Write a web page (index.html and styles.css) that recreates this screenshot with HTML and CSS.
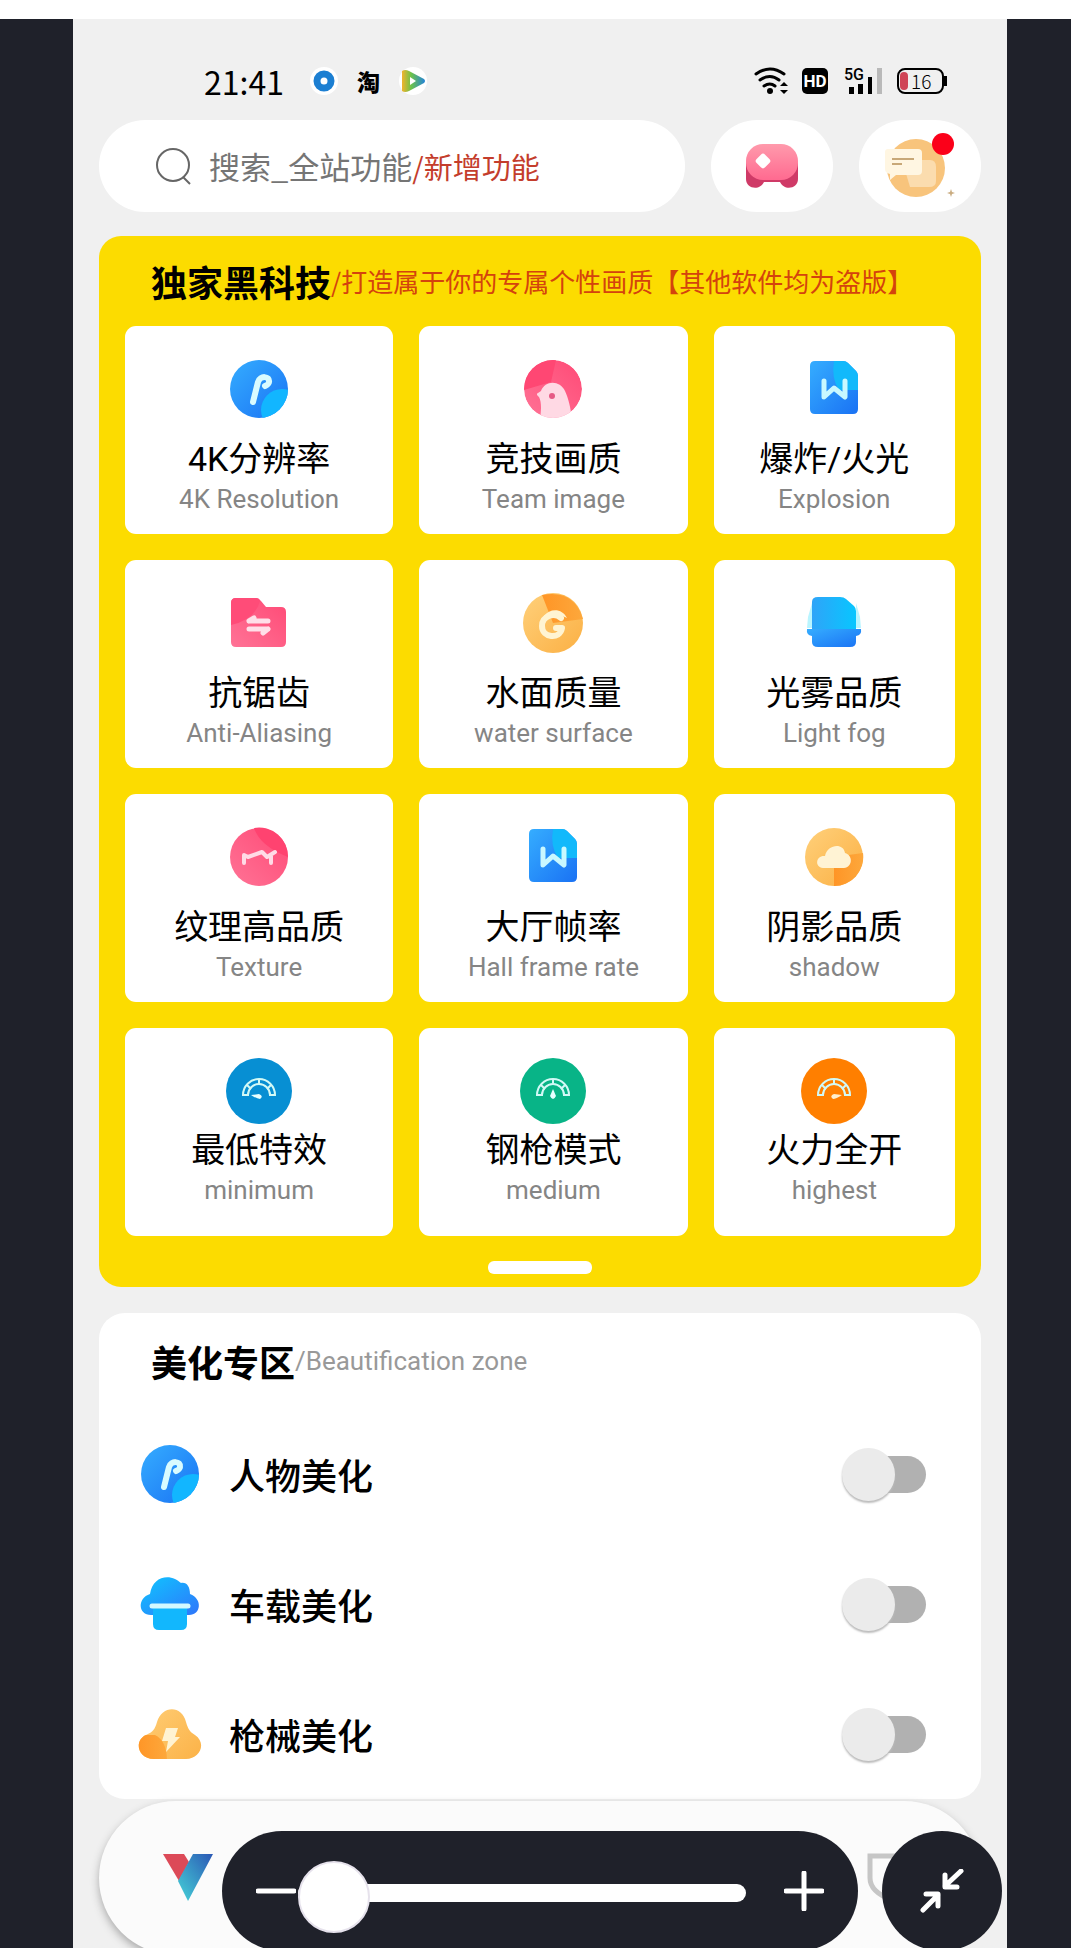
FILE: index.html
```html
<!DOCTYPE html>
<html lang="zh-CN">
<head>
<meta charset="utf-8">
<meta name="viewport" content="width=device-width, initial-scale=1">
<title>独家黑科技</title>
<link rel="stylesheet" href="styles.css">
</head>
<body>
<svg class="defs" width="0" height="0" aria-hidden="true">
  <defs>
    <linearGradient id="blue" x1="0" y1="0" x2="1" y2="1"><stop offset="0" stop-color="#35adff"/><stop offset="1" stop-color="#1a72f4"/></linearGradient>
    <linearGradient id="cyan" x1="0" y1="0" x2="1" y2="1"><stop offset="0" stop-color="#0fc6ff"/><stop offset="1" stop-color="#2f76fb"/></linearGradient>
    <linearGradient id="sky" x1="0" y1="0" x2="1" y2="0"><stop offset="0" stop-color="#2fa4f8"/><stop offset="1" stop-color="#08c6ff"/></linearGradient>
    <linearGradient id="pink" x1="0" y1="1" x2="1" y2="0"><stop offset="0" stop-color="#ff7396"/><stop offset="1" stop-color="#ff4a76"/></linearGradient>
    <linearGradient id="rose" x1="0" y1="0" x2="0" y2="1"><stop offset="0" stop-color="#ff9aac"/><stop offset="1" stop-color="#ff6a90"/></linearGradient>
    <linearGradient id="gold" x1="0" y1="0" x2="1" y2="1"><stop offset="0" stop-color="#ffd07a"/><stop offset="1" stop-color="#fbb044"/></linearGradient>
    <linearGradient id="amber" x1="0" y1="0" x2="1" y2="0"><stop offset="0" stop-color="#ff9526"/><stop offset="1" stop-color="#fda83c"/></linearGradient>
    <linearGradient id="vee" x1="1" y1="0" x2="0" y2="1"><stop offset="0" stop-color="#2b57b5"/><stop offset="1" stop-color="#45d4d8"/></linearGradient>
    <linearGradient id="play" x1="0" y1="0" x2="1" y2="0"><stop offset="0" stop-color="#f2b32c"/><stop offset=".4" stop-color="#6cc24a"/><stop offset="1" stop-color="#2484d8"/></linearGradient>
    <clipPath id="disc"><circle cx="33" cy="33" r="29"/></clipPath>
    <clipPath id="puff"><path d="M17 58C0 58-3 39 9 34c7-3 9-6 11-13 5-17 25-17 29 0 2 7 4 10 9 13 12 8 5 24-9 24z"/></clipPath>
    <symbol id="i-cane" viewBox="0 0 66 66">
      <circle cx="33" cy="33" r="29" fill="url(#blue)"/>
      <circle cx="56" cy="54" r="21" fill="#12b6ff" clip-path="url(#disc)"/>
      <path d="M27 46l5-20c2-7 12-6 11 0 0 2-2 3-4 4" fill="none" stroke="#d9fbff" stroke-width="6" stroke-linecap="round" stroke-linejoin="round"/>
    </symbol>
    <symbol id="i-bird" viewBox="0 0 66 66">
      <g clip-path="url(#disc)">
        <circle cx="33" cy="33" r="29" fill="url(#pink)"/>
        <path d="M4 4h32l-5 22-27 8z" fill="#ff4773"/>
        <path d="M20 66c1-12 2-19-1-25-2-2-3-3-1-4l3-2c4-11 19-11 24 0 4 9 6 18 7 31z" fill="#ffd9e4"/>
      </g>
      <circle cx="32" cy="40" r="3" fill="#e65a85"/>
    </symbol>
    <symbol id="i-doc" viewBox="0 0 66 66">
      <path d="M14 5h28q3 0 5 2l8 8q2 2 2 5v33q0 5-5 5H14q-5 0-5-5V10q0-5 5-5z" fill="url(#blue)"/>
      <path d="M33 5h9q3 0 5 2l8 8q2 2 2 5v14H38q-8-12-5-29z" fill="#12b9fb"/>
      <path d="M23 25v16l10-9 11 9V25" fill="none" stroke="#c9f8ff" stroke-width="5" stroke-linecap="round" stroke-linejoin="round"/>
    </symbol>
    <symbol id="i-folder" viewBox="0 0 66 66">
      <path d="M10 8h20q3 0 5 3l5 6h15q5 0 5 5v30q0 5-5 5H10q-5 0-5-5V13q0-5 5-5z" fill="url(#pink)"/>
      <path d="M10 8h20q3 0 4 3Q29 30 5 35V13q0-5 5-5z" fill="#ff4c78"/>
      <path d="M23 31h19M23 31l5-3M42 39H23M42 39l-5 4" fill="none" stroke="#ffdfe8" stroke-width="5" stroke-linecap="round"/>
    </symbol>
    <symbol id="i-swirl" viewBox="0 0 66 66">
      <circle cx="33" cy="33" r="30" fill="url(#gold)"/>
      <path d="M33 33L22 5q32-6 41 24z" fill="url(#amber)"/>
      <path d="M41 28c-7-6-19-2-19 8 0 12 18 14 20 2h-6" fill="none" stroke="#fff4d2" stroke-width="6" stroke-linecap="round" stroke-linejoin="round"/>
      <path d="M24 26c6-8 18-8 23 2-6-3-12-3-19 1z" fill="#fff4d2"/>
    </symbol>
    <symbol id="i-scan" viewBox="0 0 66 66">
      <path d="M7 27l4-14v25H6zM59 27l-4-14v25h5z" fill="#b9f5ff"/>
      <path d="M17 7h22q4 0 6 2l8 7q2 2 2 5v21H11V12q0-5 6-5z" fill="url(#sky)"/>
      <path d="M6 39h54q1 6-5 7v6q0 5-6 5H17q-6 0-6-5v-6q-6-1-5-7z" fill="url(#blue)"/>
    </symbol>
    <symbol id="i-dog" viewBox="0 0 66 66">
      <circle cx="33" cy="33" r="29" fill="url(#pink)"/>
      <path d="M28 4Q34 22 62 33A29 29 0 0 0 28 4z" fill="#ff4370"/>
      <path d="M18 39V31l4 2 14-5 5 5 8-5M45 39v-7" fill="none" stroke="#ffdbe6" stroke-width="4" stroke-linecap="round" stroke-linejoin="round"/>
    </symbol>
    <symbol id="i-cloud" viewBox="0 0 66 66">
      <circle cx="33" cy="33" r="29" fill="url(#gold)"/>
      <path d="M33 33l29-4A29 29 0 0 1 33 62z" fill="url(#amber)"/>
      <path d="M22 44c-9-1-7-13 2-12 2-11 18-14 20-3 8 2 8 14-1 15z" fill="#fff3d4"/>
    </symbol>
    <symbol id="dial" viewBox="0 0 66 66">
      <path d="M17 37a16 16 0 0 1 32 0h-5a11 11 0 0 0-22 0z" fill="none" stroke="#d2f9f6" stroke-width="2"/>
      <path d="M21 27l4 4M33 21v6M45 27l-4 4" stroke="#d2f9f6" stroke-width="2"/>
    </symbol>
    <symbol id="i-low" viewBox="0 0 66 66"><circle cx="33" cy="33" r="33" fill="#078fd3"/><use href="#dial" width="66" height="66"/><path d="M25 37l8-1q5 2 1 5-3 0-9-4z" fill="#e6ffff"/></symbol>
    <symbol id="i-mid" viewBox="0 0 66 66"><circle cx="33" cy="33" r="33" fill="#08b487"/><use href="#dial" width="66" height="66"/><path d="M33 31l3 7q-3 6-6 0z" fill="#e6ffff"/></symbol>
    <symbol id="i-high" viewBox="0 0 66 66"><circle cx="33" cy="33" r="33" fill="#ff7f00"/><use href="#dial" width="66" height="66"/><path d="M41 37l-8-1q-5 2-1 5 3 0 9-4z" fill="#ffefcc"/></symbol>
    <symbol id="i-mushroom" viewBox="0 0 66 66">
      <path d="M14 44C1 44 0 27 13 23 15 8 28 3 38 8c3 1 4 3 6 4 6-1 9 4 9 11 13 5 11 21-1 21z" fill="url(#cyan)"/>
      <path d="M16 37h34v16q0 6-6 6H22q-6 0-6-6z" fill="#12b7fd"/>
      <path d="M15 35h36" stroke="#d3f8ff" stroke-width="5" stroke-linecap="round"/>
    </symbol>
    <symbol id="i-bolt" viewBox="0 0 66 66">
      <g clip-path="url(#puff)">
        <path d="M0 0h66v66H0z" fill="url(#gold)"/>
        <path d="M0 34h18q12 6 12 26H0z" fill="url(#amber)"/>
      </g>
      <path d="M29 27h12l-3 9h5L29 51l2-11h-6z" fill="#fff3d2"/>
    </symbol>
  </defs>
</svg>

<div class="phone">
  <header class="status">
    <time class="clock">21:41</time>
    <svg class="app-dot" viewBox="0 0 28 28" aria-hidden="true"><circle cx="14" cy="14" r="14" fill="#fff"/><circle cx="14" cy="14" r="7" fill="none" stroke="#1c7fd2" stroke-width="7"/></svg>
    <span class="app-tao">淘</span>
    <svg class="app-dot" viewBox="0 0 28 28" aria-hidden="true"><circle cx="14" cy="14" r="14" fill="#fff"/><path d="M3 4q3-2 7 0l15 8q2 2 0 4l-15 8q-4 2-7 0z" fill="url(#play)"/><path d="M11 10l6 4-6 4z" fill="#fff"/></svg>
    <span class="grow"></span>
    <svg class="wifi" viewBox="0 0 36 28" aria-hidden="true"><g fill="none" stroke="#000" stroke-width="3" stroke-linecap="round"><path d="M3 7q14-10 28 0M7 13q10-7 19 0M11 19q6-4 11 0"/></g><circle cx="17" cy="24" r="3"/><path d="M27 19l4-4 4 4zM27 23l4 4 4-4z"/></svg>
    <span class="hd">HD</span>
    <span class="signal"><span class="gen">5G</span><svg viewBox="0 0 40 28" aria-hidden="true"><path d="M5 20h5v7H5zM14 17h5v10h-5zM24 10h4v17h-4z"/><path d="M33 1h5v26h-5z" fill="#b9b9b9"/></svg></span>
    <span class="battery"><span class="level"></span>16</span>
  </header>

  <div class="top">
    <button class="search" type="button">
      <svg viewBox="0 0 38 38" fill="none" stroke="#666" stroke-width="2" aria-hidden="true"><circle cx="18" cy="18" r="16"/><path d="M28 30l7 7"/></svg>
      <span>搜索_全站功能<em>/新增功能</em></span>
    </button>
    <button class="round" type="button" aria-label="游戏">
      <svg width="60" height="60" viewBox="0 -2 60 60"><path d="M4 24v17c0 10 14 12 18 3h16c4 9 18 7 18-3V24z" fill="#cf3a67"/><rect x="4" y="6" width="52" height="36" rx="17" fill="url(#rose)"/><rect x="15" y="17" width="12" height="12" rx="3" fill="#fff" transform="rotate(45 21 23)"/></svg>
    </button>
    <button class="round" type="button" aria-label="消息">
      <svg width="80" height="80" viewBox="0 0 80 80"><circle cx="36" cy="42" r="29" fill="#f8c47c"/><path d="M22 34h28q6 0 6 7v14q0 6-7 6H30z" fill="#fbdcae"/><path d="M8 23h30q4 0 4 4v18q0 4-4 4H16l-6 5v-6q-5-1-5-5V26q0-3 3-3z" fill="#fff6e2"/><path d="M12 33h22M12 38h10" stroke="#c8a878" stroke-width="2"/><path d="M71 63l1 3 3 1-3 1-1 3-1-3-3-1 3-1z" fill="#c9ac80"/><circle cx="63" cy="18" r="11" fill="#fb0019"/></svg>
    </button>
  </div>

  <section class="panel">
    <h2 class="heading">独家黑科技<small>/打造属于你的专属个性画质【其他软件均为盗版】</small></h2>
    <div class="grid">
      <button type="button" class="card"><svg><use href="#i-cane"/></svg><b>4K分辨率</b><span>4K Resolution</span></button>
      <button type="button" class="card"><svg><use href="#i-bird"/></svg><b>竞技画质</b><span>Team image</span></button>
      <button type="button" class="card"><svg><use href="#i-doc"/></svg><b>爆炸/火光</b><span>Explosion</span></button>
      <button type="button" class="card"><svg><use href="#i-folder"/></svg><b>抗锯齿</b><span>Anti-Aliasing</span></button>
      <button type="button" class="card"><svg><use href="#i-swirl"/></svg><b>水面质量</b><span>water surface</span></button>
      <button type="button" class="card"><svg><use href="#i-scan"/></svg><b>光雾品质</b><span>Light fog</span></button>
      <button type="button" class="card"><svg><use href="#i-dog"/></svg><b>纹理高品质</b><span>Texture</span></button>
      <button type="button" class="card"><svg><use href="#i-doc"/></svg><b>大厅帧率</b><span>Hall frame rate</span></button>
      <button type="button" class="card"><svg><use href="#i-cloud"/></svg><b>阴影品质</b><span>shadow</span></button>
      <button type="button" class="card mode"><svg><use href="#i-low"/></svg><b>最低特效</b><span>minimum</span></button>
      <button type="button" class="card mode"><svg><use href="#i-mid"/></svg><b>钢枪模式</b><span>medium</span></button>
      <button type="button" class="card mode"><svg><use href="#i-high"/></svg><b>火力全开</b><span>highest</span></button>
    </div>
    <div class="handle"></div>
  </section>

  <section class="beauty">
    <h2 class="heading">美化专区<small>/Beautification zone</small></h2>
    <label class="row"><svg><use href="#i-cane"/></svg><span>人物美化</span><input type="checkbox" class="switch"></label>
    <label class="row"><svg><use href="#i-mushroom"/></svg><span>车载美化</span><input type="checkbox" class="switch"></label>
    <label class="row"><svg><use href="#i-bolt"/></svg><span>枪械美化</span><input type="checkbox" class="switch"></label>
  </section>

  <nav class="tabs">
    <button type="button" aria-label="首页"><svg viewBox="0 0 50 50"><path d="M0 1h21l5 8-10 19z" fill="#dc4a58"/><path d="M30 1h20L25 48 15 28z" fill="url(#vee)"/></svg></button>
    <button type="button" aria-label="防护"><svg viewBox="0 0 50 50"><path d="M3 3h44v22q0 14-22 22Q3 39 3 25z" fill="none" stroke="#c6c6c6" stroke-width="5"/></svg></button>
  </nav>
</div>

<div class="viewer">
  <div class="zoombar">
    <button type="button" aria-label="缩小"><svg viewBox="0 0 40 40"><path d="M2 20h36"/></svg></button>
    <input type="range" min="0" max="100" value="0" aria-label="缩放">
    <button type="button" aria-label="放大" class="plus"><svg viewBox="0 0 40 40"><path d="M2 20h36M20 2v36"/></svg></button>
  </div>
  <button type="button" class="shrink" aria-label="退出全屏"><svg viewBox="0 0 44 44"><path d="M41 2L25 17M25 6v12h12M3 41l15-15M6 25h12v12"/></svg></button>
</div>
</body>
</html>
```
FILE: styles.css
```css
* { box-sizing: border-box; }

body {
  margin: 0;
  height: 100vh;
  padding: 0 64px 0 73px;
  border-top: 19px solid #fff;
  overflow: hidden;
  position: relative;
  background: #1f212a;
  color: #000;
  font-family: Roboto, "Noto Sans CJK SC", sans-serif;
}

.defs { position: absolute; }

button {
  border: 0;
  padding: 0;
  color: inherit;
  font: inherit;
  cursor: pointer;
}

.phone {
  min-height: 100%;
  padding: 0 26px;
  background: #f0f0f0;
}

/* status bar */
.status {
  display: flex;
  align-items: center;
  height: 101px;
  padding: 40px 33px 18px 105px;
}
.clock {
  margin-right: 26px;
  font: 32px/40px "Noto Sans CJK SC", sans-serif;
}
.app-dot { width: 28px; height: 28px; }
.app-tao {
  margin: 0 19px;
  font: 900 23px/28px "Noto Sans CJK SC", sans-serif;
}
.grow { flex: 1; }
.wifi { width: 36px; height: 28px; }
.hd {
  width: 26px;
  height: 26px;
  margin: 0 16px 0 13px;
  border-radius: 5px;
  background: #000;
  color: #fff;
  text-align: center;
  font: 700 17px/26px Roboto, sans-serif;
}
.signal {
  position: relative;
  width: 40px;
  height: 28px;
}
.signal svg { display: block; width: 40px; height: 28px; }
.gen {
  position: absolute;
  left: 0;
  top: 0;
  font: 500 16px/16px Roboto, sans-serif;
}
.battery {
  position: relative;
  display: flex;
  align-items: center;
  gap: 3px;
  width: 47px;
  height: 26px;
  margin: 0 4px 0 13px;
  padding-left: 1px;
  border: 2px solid #000;
  border-radius: 8px;
  font: 300 19px/20px "Noto Sans CJK SC", sans-serif;
}
.battery::after {
  content: "";
  position: absolute;
  right: -5px;
  top: 6px;
  width: 3px;
  height: 10px;
  background: #000;
}
.level {
  width: 8px;
  height: 18px;
  border-radius: 4px;
  background: #cf4456;
}

/* search */
.top { display: flex; gap: 26px; height: 92px; }
.search {
  flex: 1;
  display: flex;
  align-items: center;
  gap: 16px;
  padding-left: 56px;
  border-radius: 46px;
  background: #fff;
  color: #757575;
  font: 31px/46px "Noto Sans CJK SC", sans-serif;
  white-space: nowrap;
}
.search svg { width: 38px; height: 38px; }
.search em { color: #c43d2c; font-size: 29px; font-style: normal; }
.round {
  display: flex;
  align-items: center;
  justify-content: center;
  width: 122px;
  border-radius: 46px;
  background: #fff;
}

/* feature panel */
.panel {
  margin-top: 24px;
  padding: 0 26px 13px;
  border-radius: 22px;
  background: #fcdc00;
}
.heading {
  display: flex;
  align-items: center;
  height: 90px;
  margin: 0;
  padding-left: 26px;
  font: 700 36px/52px "Noto Sans CJK SC", sans-serif;
  white-space: nowrap;
}
.heading small { font-size: 26px; font-weight: 400; }
.panel .heading small { color: #d4430d; }
.grid {
  display: grid;
  grid-template-columns: 10fr 10fr 9fr;
  gap: 26px;
}
.card {
  display: flex;
  flex-direction: column;
  align-items: center;
  height: 208px;
  padding-top: 30px;
  border-radius: 11px;
  background: #fff;
}
.card svg { width: 66px; height: 66px; margin-bottom: 14px; }
.card b { font-size: 34px; font-weight: 400; line-height: 46px; }
.card span { color: #858585; font-size: 26px; line-height: 34px; }
.card.mode svg { margin-bottom: 3px; }
.handle {
  width: 104px;
  height: 13px;
  margin: 25px auto 0;
  border-radius: 6px;
  background: #fff;
}

/* switches */
.beauty {
  margin-top: 26px;
  padding: 0 26px;
  border-radius: 26px;
  background: #fff;
}
.beauty .heading { height: 96px; }
.beauty small { color: #999; font-family: Roboto, sans-serif; }
.row {
  display: flex;
  align-items: center;
  height: 130px;
  padding: 0 29px 0 12px;
  font-size: 36px;
  font-weight: 500;
}
.row svg { width: 66px; height: 66px; margin-right: 26px; }
.row span { flex: 1; }
.switch {
  appearance: none;
  position: relative;
  width: 74px;
  height: 37px;
  margin: 0;
  border-radius: 19px;
  background: #b1b1b1;
}
.switch::before {
  content: "";
  position: absolute;
  left: -10px;
  top: -8px;
  width: 53px;
  height: 53px;
  border-radius: 50%;
  background: #ebebeb;
  box-shadow: 0 2px 2px #bbb;
}
.switch:checked::before { left: 31px; }

.tabs {
  display: flex;
  align-items: center;
  justify-content: space-between;
  height: 154px;
  margin-top: 2px;
  padding: 0 64px;
  border-radius: 77px;
  background: #fbfbfb;
  box-shadow: 0 4px 8px #aaa;
}
.tabs button { background: none; }
.tabs svg { display: block; width: 50px; height: 50px; }

/* image viewer controls */
.viewer {
  position: absolute;
  left: 222px;
  right: 69px;
  bottom: -3px;
  display: flex;
  gap: 24px;
}
.viewer button { background: none; }
.viewer svg {
  display: block;
  width: 40px;
  height: 40px;
  fill: none;
  stroke: #fff;
  stroke-width: 5;
  stroke-linecap: round;
  stroke-linejoin: round;
}
.zoombar {
  flex: 1;
  display: flex;
  align-items: center;
  height: 120px;
  padding: 0 34px;
  border-radius: 60px;
  background: #1f212a;
}
.zoombar input {
  appearance: none;
  flex: 1;
  min-width: 0;
  height: 72px;
  margin: 4px 38px 0 2px;
  background: none;
}
.zoombar input::-webkit-slider-runnable-track {
  height: 18px;
  border-radius: 9px;
  background: #fff;
}
.zoombar input::-webkit-slider-thumb {
  appearance: none;
  width: 72px;
  height: 72px;
  margin-top: -23px;
  border: 2px solid #e6e2ec;
  border-radius: 50%;
  background: #fff;
}
.viewer .shrink {
  display: flex;
  align-items: center;
  justify-content: center;
  width: 120px;
  height: 120px;
  border-radius: 50%;
  background: #1f212a;
}
.shrink svg { width: 44px; height: 44px; }
```
